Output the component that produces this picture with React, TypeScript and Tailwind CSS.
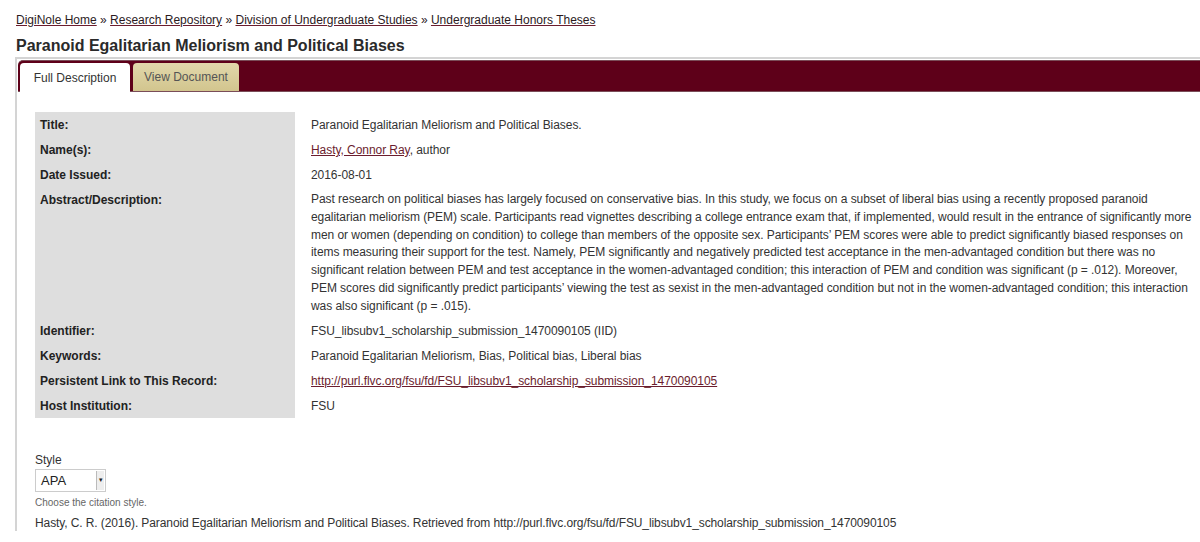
import React from "react"

const rows: { label: string; value: React.ReactNode }[] = [
  { label: "Title:", value: "Paranoid Egalitarian Meliorism and Political Biases." },
  {
    label: "Name(s):",
    value: (
      <>
        <a href="#" className="text-[#6b1d2e] underline">Hasty, Connor Ray</a>, author
      </>
    ),
  },
  { label: "Date Issued:", value: "2016-08-01" },
  {
    label: "Abstract/Description:",
    value:
      "Past research on political biases has largely focused on conservative bias. In this study, we focus on a subset of liberal bias using a recently proposed paranoid egalitarian meliorism (PEM) scale. Participants read vignettes describing a college entrance exam that, if implemented, would result in the entrance of significantly more men or women (depending on condition) to college than members of the opposite sex. Participants\u2019 PEM scores were able to predict significantly biased responses on items measuring their support for the test. Namely, PEM significantly and negatively predicted test acceptance in the men-advantaged condition but there was no significant relation between PEM and test acceptance in the women-advantaged condition; this interaction of PEM and condition was significant (p = .012). Moreover, PEM scores did significantly predict participants\u2019 viewing the test as sexist in the men-advantaged condition but not in the women-advantaged condition; this interaction was also significant (p = .015).",
  },
  { label: "Identifier:", value: "FSU_libsubv1_scholarship_submission_1470090105 (IID)" },
  { label: "Keywords:", value: "Paranoid Egalitarian Meliorism, Bias, Political bias, Liberal bias" },
  {
    label: "Persistent Link to This Record:",
    value: (
      <a href="#" className="text-[#6b1d2e] underline">
        http://purl.flvc.org/fsu/fd/FSU_libsubv1_scholarship_submission_1470090105
      </a>
    ),
  },
  { label: "Host Institution:", value: "FSU" },
]

export default function App() {
  return (
    <div className="w-[1200px] h-[542px] overflow-hidden bg-white text-[#333] font-['Liberation_Sans',Arial,sans-serif]">
      <div className="pl-4 pt-[13px] text-[12px] leading-[14px] text-[#2b1a1e]">
        <a href="#" className="underline decoration-[#6b1d2e]">DigiNole Home</a> »{" "}
        <a href="#" className="underline decoration-[#6b1d2e]">Research Repository</a> »{" "}
        <a href="#" className="underline decoration-[#6b1d2e]">Division of Undergraduate Studies</a> »{" "}
        <a href="#" className="underline decoration-[#6b1d2e]">Undergraduate Honors Theses</a>
      </div>
      <h1 className="pl-4 pt-[9px] text-[16px] leading-[19px] font-bold text-[#2a2a2a]">
        Paranoid Egalitarian Meliorism and Political Biases
      </h1>

      <div className="ml-[15px] mt-[2px] border-l-2 border-t-2 border-[#d4d4d4] pl-[1px] pt-[1px]">
        <div className="h-[32px] bg-[#5e0019] rounded-tl-[5px] border-y border-[#7a4d58] flex items-end pl-[2px] gap-[3px]">
          <div className="h-[29px] w-[110px] bg-white rounded-t-[4px] flex items-center justify-center text-[12px] text-[#333] -mb-[1px]">
            Full Description
          </div>
          <div className="h-[28px] w-[106px] bg-gradient-to-b from-[#e2d8ab] to-[#d2c58e] rounded-t-[4px] flex items-center justify-center text-[12px] text-[#555]">
            View Document
          </div>
        </div>

        <div className="pl-[17px] pt-[20px] text-[12px]">
          <div className="flex">
            <div className="w-[260px] shrink-0 bg-[#dedede]">
              {rows.map((r) => (
                <div
                  key={r.label}
                  className={
                    "pl-[5px] pt-[4px] pb-[3px] leading-[18px] font-bold text-[#222] " +
                    (r.label === "Abstract/Description:" ? "h-[131px]" : "h-[25px]")
                  }
                >
                  {r.label}
                </div>
              ))}
            </div>
            <div className="w-[900px] shrink-0 pl-[16px] tracking-[-0.055px]">
              {rows.map((r) => (
                <div
                  key={r.label}
                  className={
                    "pt-[4px] pb-[3px] text-[#333] " +
                    (r.label === "Abstract/Description:" ? "h-[131px] leading-[17.8px]" : "h-[25px] leading-[18px]")
                  }
                >
                  {r.value}
                </div>
              ))}
            </div>
          </div>

          <div className="pt-[35px] leading-[14px]">Style</div>
          <div className="mt-[2px] w-[71px] h-[23px] border border-[#ccc] bg-white flex items-center justify-between pl-[5px] pr-[1px]">
            <span className="text-[13px] text-[#222]">APA</span>
            <span className="w-[8px] h-[19px] bg-[#eee] border-l border-[#bbb] flex items-center justify-center text-[7px] text-[#222]">
              ▾
            </span>
          </div>
          <div className="mt-[4px] text-[10px] leading-[13px] text-[#666]">Choose the citation style.</div>
          <div className="mt-[7px] leading-[15px] text-[#333] tracking-[-0.1px]">
            Hasty, C. R. (2016). Paranoid Egalitarian Meliorism and Political Biases. Retrieved from
            http://purl.flvc.org/fsu/fd/FSU_libsubv1_scholarship_submission_1470090105
          </div>
        </div>
      </div>
    </div>
  )
}
